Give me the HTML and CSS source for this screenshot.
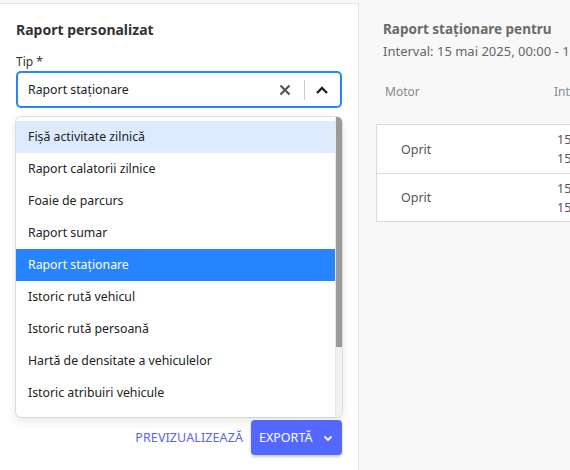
FILE: index.html
```html
<!DOCTYPE html>
<html lang="ro">
<head>
<meta charset="utf-8">
<link rel="stylesheet" href="styles.css">
</head>
<body>
<div class="page">
  <aside class="panel">
    <h2 class="panel-title">Raport personalizat</h2>
    <label class="field-label">Tip *</label>
    <div class="select">
      <span class="select-value">Raport staționare</span>
      <span class="select-clear">
        <svg width="14" height="14" viewBox="0 0 14 14"><path d="M2.5 2.5 L11.5 11.5 M11.5 2.5 L2.5 11.5" stroke="#555" stroke-width="2.2" stroke-linecap="butt"/></svg>
      </span>
      <span class="select-sep"></span>
      <span class="select-arrow">
        <svg width="14" height="14" viewBox="0 0 14 14"><path d="M2 10 L7 5 L12 10" fill="none" stroke="#222" stroke-width="2.4" stroke-linejoin="miter"/></svg>
      </span>
    </div>
    <div class="menu">
      <div class="menu-list">
        <div class="opt focus">Fişă activitate zilnică</div>
        <div class="opt">Raport calatorii zilnice</div>
        <div class="opt">Foaie de parcurs</div>
        <div class="opt">Raport sumar</div>
        <div class="opt selected">Raport staționare</div>
        <div class="opt">Istoric rută vehicul</div>
        <div class="opt">Istoric rută persoană</div>
        <div class="opt">Hartă de densitate a vehiculelor</div>
        <div class="opt">Istoric atribuiri vehicule</div>
      </div>
      <div class="scrollbar"><div class="thumb"></div></div>
    </div>
    <div class="actions">
      <button class="btn-text">PREVIZUALIZEAZĂ</button>
      <button class="btn-primary">EXPORTĂ
        <svg width="12" height="12" viewBox="0 0 12 12"><path d="M2.5 4.5 L6 8 L9.5 4.5" fill="none" stroke="#fff" stroke-width="1.8"/></svg>
      </button>
    </div>
  </aside>
  <main class="content">
    <h3 class="report-title">Raport staționare pentru</h3>
    <div class="report-interval">Interval: 15 mai 2025, 00:00 - 15 mai 2025, 23:59</div>
    <div class="table-head">
      <span class="th th-motor">Motor</span>
      <span class="th">Interval</span>
    </div>
    <div class="table">
      <div class="row">
        <span class="cell-motor">Oprit</span>
        <span class="cell-int"><span>15.05.2025 00:00</span><span>15.05.2025 06:12</span></span>
      </div>
      <div class="row">
        <span class="cell-motor">Oprit</span>
        <span class="cell-int"><span>15.05.2025 07:40</span><span>15.05.2025 12:03</span></span>
      </div>
    </div>
  </main>
</div>
</body>
</html>
```

FILE: styles.css
```css
* { box-sizing: border-box; }
html, body { margin: 0; padding: 0; }
body {
  width: 570px;
  height: 470px;
  overflow: hidden;
  background: #f8f8f8;
  font-family: "Noto Sans", "Open Sans", sans-serif;
  color: #333;
}
.page {
  display: flex;
  height: 470px;
  padding-top: 3px;
}
.panel {
  width: 359px;
  flex: none;
  background: #fff;
  border-top: 1px solid #e4e4e4;
  border-right: 1px solid #e4e4e4;
  padding: 0 16px 0 16px;
  display: flex;
  flex-direction: column;
}
.panel-title {
  margin: 16px 0 0 0;
  font-size: 14px;
  font-weight: 700;
  line-height: 20px;
  color: #333;
}
.field-label {
  margin-top: 15px;
  font-size: 12px;
  line-height: 14px;
  color: #333;
}
.select {
  margin-top: 2px;
  width: 326px;
  height: 37px;
  border: 2px solid #2684ff;
  border-radius: 5px;
  display: flex;
  align-items: center;
  padding-left: 10px;
}
.select-value {
  flex: 1;
  font-size: 12.3px;
  color: #222;
}
.select-clear {
  display: flex;
  width: 14px;
  margin-right: 12px;
}
.select-sep {
  width: 1px;
  height: 20px;
  background: #ccc;
  margin-right: 10px;
}
.select-arrow {
  display: flex;
  width: 14px;
  margin-right: 11px;
}
.menu {
  margin-top: 9px;
  width: 326px;
  height: 300px;
  border-radius: 5px;
  background: #fff;
  box-shadow: 0 0 0 1px rgba(0,0,0,0.1), 0 4px 11px rgba(0,0,0,0.1);
  overflow: hidden;
  display: flex;
}
.menu-list {
  flex: 1;
  padding-top: 4px;
}
.opt {
  height: 32px;
  line-height: 32px;
  padding-left: 12px;
  font-size: 12.3px;
  color: #222;
  white-space: nowrap;
}
.opt.focus { background: #deebff; }
.opt.selected { background: #2684ff; color: #fff; }
.scrollbar {
  width: 7px;
  background: #f1f1f1;
  border-left: 1px solid #e8e8e8;
}
.thumb {
  height: 230px;
  background: #9a9a9a;
}
.actions {
  margin-top: 3px;
  display: flex;
  justify-content: flex-end;
  align-items: center;
  gap: 8px;
}
.btn-text {
  border: none;
  background: none;
  font-family: inherit;
  font-size: 12.5px;
  color: #5a63f0;
  padding: 0;
  letter-spacing: 0.1px;
}
.btn-primary {
  border: none;
  background: #5468ff;
  color: #fff;
  font-family: inherit;
  font-size: 12.5px;
  height: 35px;
  width: 91px;
  border-radius: 4px;
  display: flex;
  align-items: center;
  justify-content: flex-start;
  padding-left: 8px;
  gap: 10px;
  box-shadow: 0 2px 3px rgba(0,0,0,0.2);
}
.content {
  flex: 1;
  padding: 16px 0 0 17px;
  white-space: nowrap;
  overflow: hidden;
}
.report-title {
  margin: 0 0 0 7px;
  font-size: 13.5px;
  font-weight: 700;
  line-height: 20px;
  color: #6a6a6a;
}
.report-interval {
  margin: 3px 0 0 7px;
  font-size: 13px;
  line-height: 18px;
  color: #666;
}
.table-head {
  display: flex;
  margin-top: 19px;
  height: 45px;
  padding-top: 4px;
  font-size: 12px;
  color: #888;
}
.th { flex: none; }
.th-motor { margin-left: 9px; width: 169px; }
.th + .th { margin-left: 0; }
.table {
  width: 300px;
  border: 1px solid #dcdcdc;
  background: #fff;
}
.row {
  display: flex;
  align-items: center;
  height: 48px;
}
.row + .row { border-top: 1px solid #dcdcdc; }
.cell-motor {
  flex: none;
  width: 180px;
  padding-left: 24px;
  font-size: 12.5px;
  color: #555;
}
.cell-int {
  flex: none;
  display: flex;
  flex-direction: column;
  font-size: 12.5px;
  color: #555;
  line-height: 19px;
}
```
